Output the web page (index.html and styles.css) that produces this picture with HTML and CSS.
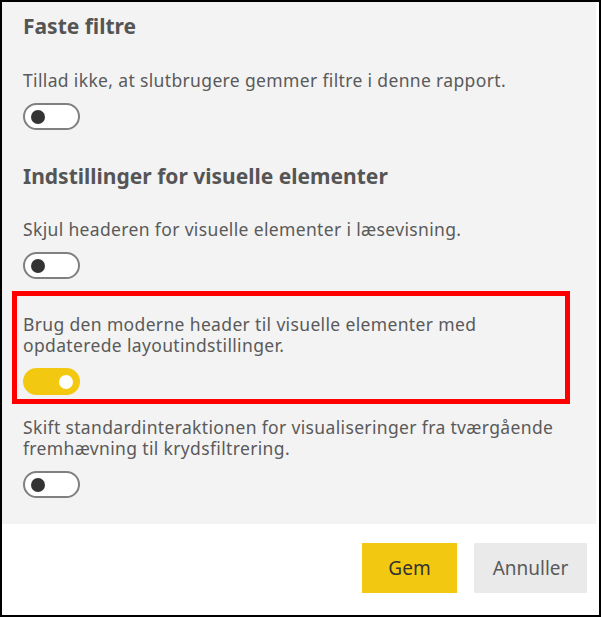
FILE: index.html
```html
<!DOCTYPE html>
<html lang="da">
<head>
<meta charset="utf-8">
<title>Rapportindstillinger</title>
<link rel="stylesheet" href="styles.css">
</head>
<body>
<div class="frame">
  <div class="panel">
    <h2 class="heading">Faste filtre</h2>
    <div class="setting">
      <p class="label">Tillad ikke, at slutbrugere gemmer filtre i denne rapport.</p>
      <span class="toggle"><span class="knob"></span></span>
    </div>

    <h2 class="heading heading-2">Indstillinger for visuelle elementer</h2>
    <div class="setting">
      <p class="label">Skjul headeren for visuelle elementer i læsevisning.</p>
      <span class="toggle"><span class="knob"></span></span>
    </div>

    <div class="setting highlight">
      <p class="label">Brug den moderne header til visuelle elementer med<br>opdaterede layoutindstillinger.</p>
      <span class="toggle on"><span class="knob"></span></span>
    </div>

    <div class="setting last">
      <p class="label">Skift standardinteraktionen for visualiseringer fra tværgående<br>fremhævning til krydsfiltrering.</p>
      <span class="toggle"><span class="knob"></span></span>
    </div>
  </div>
  <div class="footer">
    <button class="btn primary">Gem</button>
    <button class="btn secondary">Annuller</button>
  </div>
</div>
</body>
</html>
```

FILE: styles.css
```css
* { box-sizing: border-box; }

html, body {
  margin: 0;
  padding: 0;
  background: #ffffff;
}

body {
  font-family: "Noto Sans", "Open Sans", sans-serif;
  color: #5a5a5a;
}

.frame {
  width: 601px;
  height: 617px;
  border: 2px solid #000;
  background: #fff;
  display: flex;
  flex-direction: column;
}

.panel {
  background: #f3f3f3;
  height: 522px;
  margin-right: 3px;
  padding: 10px 0 0 21px;
}

.heading {
  margin: 0;
  font-size: 21px;
  line-height: 28px;
  font-weight: 700;
  color: #555555;
}

.heading-2 {
  margin-top: 32px;
}

.setting {
  display: flex;
  flex-direction: column;
  align-items: flex-start;
}

.label {
  margin: 30px 0 12px;
  font-size: 17.5px;
  letter-spacing: 0.35px;
  line-height: 21px;
  color: #5a5a5a;
  white-space: nowrap;
}

.heading-2 + .setting .label {
  margin-top: 29px;
}

.highlight {
  margin: 12px 0 0 -11px;
  width: 558px;
  border: 5px solid #ff0000;
  padding: 0 0 4px 6px;
}

.highlight .label {
  margin-top: 18px;
}

.last .label {
  margin-top: 13px;
}

.toggle {
  position: relative;
  display: block;
  width: 57px;
  height: 27px;
  border: 2px solid #808080;
  border-radius: 14px;
  background: #ffffff;
}

.toggle .knob {
  position: absolute;
  left: 6px;
  top: 4.5px;
  width: 14px;
  height: 14px;
  border-radius: 50%;
  background: #333333;
}

.toggle.on {
  border-color: #f2c811;
  background: #f2c811;
}

.toggle.on .knob {
  left: auto;
  right: 5px;
  background: #ffffff;
}

.footer {
  flex: 1;
  display: flex;
  justify-content: flex-end;
  align-items: flex-start;
  gap: 17px;
  padding: 19px 12px 0 0;
}

.btn {
  height: 50px;
  border: none;
  font-family: "Noto Sans", "Open Sans", sans-serif;
  font-size: 19px;
  padding: 0;
}

.primary {
  width: 95px;
  background: #f2c811;
  color: #333333;
}

.secondary {
  width: 113px;
  background: #eaeaea;
  color: #5a5a5a;
}
```
